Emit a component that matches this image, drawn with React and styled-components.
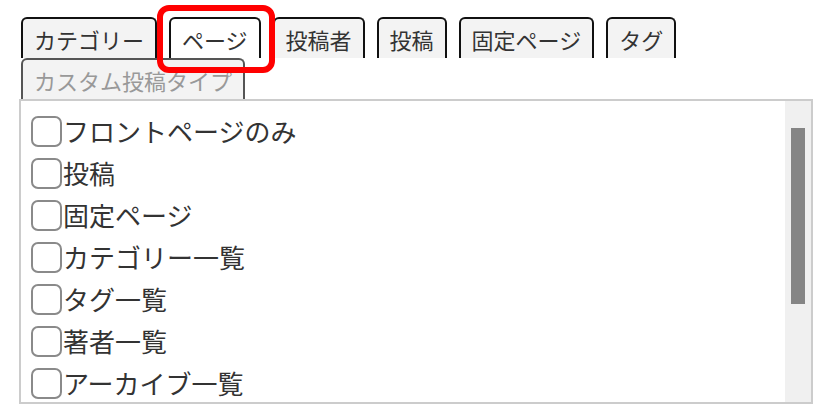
import styled, { createGlobalStyle } from "styled-components";

const GlobalStyle = createGlobalStyle`
  body {
    margin: 0;
    background: #fff;
    font-family: "Noto Sans CJK JP", "Noto Sans", sans-serif;
    color: #333;
  }
`;

const Page = styled.div`
  width: 794px;
  padding: 17px 0 0 19px;
`;

const TabBar = styled.div`
  display: flex;
  flex-wrap: wrap;
  column-gap: 12px;
  padding-left: 2px;
`;

const Tab = styled.div`
  position: relative;
  box-sizing: border-box;
  height: 41px;
  display: flex;
  align-items: center;
  padding: 0 11px;
  border: 2px solid ${(p) => (p.$disabled ? "#555" : "#111")};
  border-bottom: none;
  border-radius: 6px 6px 0 0;
  background: ${(p) => (p.$active ? "#fff" : "#f3f3f3")};
  color: ${(p) => (p.$disabled ? "#999" : "#333")};
  font-size: 22px;
  line-height: 1;
  white-space: nowrap;
`;

/* red annotation frame around the active tab */
const Highlight = styled.span`
  position: absolute;
  top: -14px;
  left: -14px;
  right: -16px;
  bottom: -15px;
  border: 6px solid #f00;
  border-radius: 12px;
  z-index: 2;
  pointer-events: none;
`;

const Panel = styled.div`
  box-sizing: border-box;
  height: 305px;
  display: flex;
  border: 2px solid #ccc;
  background: #fff;
  overflow: hidden;
`;

const List = styled.ul`
  flex: 1;
  list-style: none;
  margin: 0;
  padding: 9px 0 0 10px;
  overflow: hidden;
`;

const Item = styled.li`
  display: flex;
  align-items: center;
  height: 42px;
  font-size: 26px;
  line-height: 42px;
  color: #333;
`;

const Check = styled.input.attrs({ type: "checkbox" })`
  appearance: none;
  box-sizing: border-box;
  width: 31px;
  height: 31px;
  margin: 0 1px 0 0;
  border: 2px solid #8a8a8a;
  border-radius: 7px;
  background: #fff;
`;

const ScrollTrack = styled.div`
  width: 26px;
  flex: none;
  box-sizing: border-box;
  padding: 27px 6px 0;
  background: #f0f0f0;
`;

const ScrollThumb = styled.div`
  height: 176px;
  background: #858585;
`;

const tabs = [
  { label: "カテゴリー" },
  { label: "ページ", active: true },
  { label: "投稿者" },
  { label: "投稿" },
  { label: "固定ページ" },
  { label: "タグ" },
  { label: "カスタム投稿タイプ", disabled: true },
];

const pages = [
  "フロントページのみ",
  "投稿",
  "固定ページ",
  "カテゴリー一覧",
  "タグ一覧",
  "著者一覧",
  "アーカイブ一覧",
];

export default function App() {
  return (
    <>
      <GlobalStyle />
      <Page>
        <TabBar>
          {tabs.map((t) => (
            <Tab key={t.label} $active={t.active} $disabled={t.disabled}>
              {t.label}
              {t.active && <Highlight />}
            </Tab>
          ))}
        </TabBar>
        <Panel>
          <List>
            {pages.map((name) => (
              <Item key={name}>
                <Check />
                {name}
              </Item>
            ))}
          </List>
          <ScrollTrack>
            <ScrollThumb />
          </ScrollTrack>
        </Panel>
      </Page>
    </>
  );
}
